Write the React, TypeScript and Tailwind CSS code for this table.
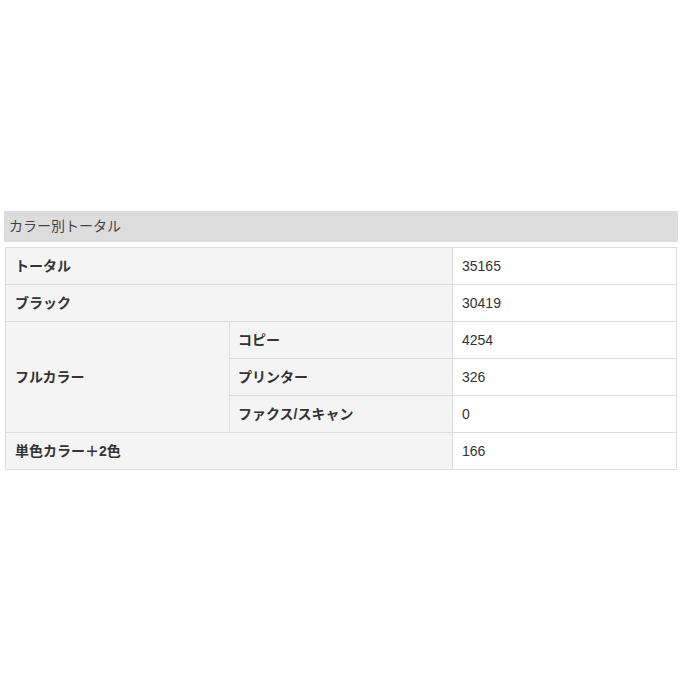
import React from "react";

const rows = [
  { label: "トータル", value: "35165" },
  { label: "ブラック", value: "30419" },
];

const fullColor = [
  { label: "コピー", value: "4254" },
  { label: "プリンター", value: "326" },
  { label: "ファクス/スキャン", value: "0" },
];

const App = () => {
  const labelCls =
    "border border-[#dddddd] bg-[#f4f4f4] px-[9px] h-[37px] font-bold text-[#333333] align-middle";
  const valueCls =
    "border border-[#dddddd] bg-white px-[9px] h-[37px] text-[#333333] align-middle";

  return (
    <div
      className="w-[683px] h-[683px] bg-white pt-[211px] pl-[4px] text-[14px]"
      style={{ fontFamily: '"Liberation Sans", "Noto Sans CJK JP", sans-serif' }}
    >
      {/* HEADER */}
      <div className="w-[674px] h-[31px] bg-[#dcdcdc] flex items-center pl-[5px] text-[#444444]">
        カラー別トータル
      </div>
      {/* TABLE */}
      <table className="ml-[1px] mt-[5px] w-[672px] border-collapse table-fixed">
        <colgroup>
          <col className="w-[224px]" />
          <col className="w-[223px]" />
          <col />
        </colgroup>
        <tbody>
          {rows.map((r) => (
            <tr key={r.label}>
              <td colSpan={2} className={labelCls}>
                {r.label}
              </td>
              <td className={valueCls}>{r.value}</td>
            </tr>
          ))}
          {fullColor.map((r, i) => (
            <tr key={r.label}>
              {i === 0 && (
                <td rowSpan={3} className={labelCls}>
                  フルカラー
                </td>
              )}
              <td className={labelCls + " pl-[8px]"}>{r.label}</td>
              <td className={valueCls}>{r.value}</td>
            </tr>
          ))}
          <tr>
            <td colSpan={2} className={labelCls}>
              単色カラー＋2色
            </td>
            <td className={valueCls}>166</td>
          </tr>
        </tbody>
      </table>
    </div>
  );
};

export default App;
